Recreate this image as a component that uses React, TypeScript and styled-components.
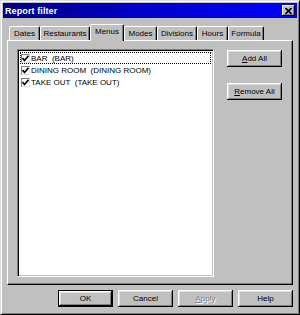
import React from 'react';
import styled, { createGlobalStyle } from 'styled-components';

const Global = createGlobalStyle`
  html, body {
    margin: 0;
    padding: 0;
    background: #c0c0c0;
  }
  * {
    box-sizing: border-box;
  }
`;

const Window = styled.div`
  width: 300px;
  height: 315px;
  background: #c0c0c0;
  border: 1px solid;
  border-color: #dfdfdf #000 #000 #dfdfdf;
  box-shadow: inset 1px 1px #fff, inset -1px -1px #808080;
  padding: 2px;
  display: flex;
  flex-direction: column;
  font-family: 'Liberation Sans', Arial, sans-serif;
  font-size: 8px;
  color: #000;
`;

const TitleBar = styled.div`
  height: 15px;
  background: linear-gradient(to right, #000080 0%, #0000c8 45%, #0000ff 100%);
  display: flex;
  align-items: center;
  justify-content: space-between;
  padding: 0 2px 0 2px;
`;

const Title = styled.span`
  color: #fff;
  font-weight: bold;
  font-size: 9px;
  letter-spacing: 0.1px;
`;

const CloseButton = styled.div`
  width: 13px;
  height: 11px;
  background: #c0c0c0;
  box-shadow: inset -1px -1px #000, inset 1px 1px #fff, inset -2px -2px #808080;
  display: flex;
  align-items: center;
  justify-content: center;
`;

const Body = styled.div`
  flex: 1;
  display: flex;
  flex-direction: column;
  padding: 6px 4px 5px 4px;
`;

const TabStrip = styled.div`
  display: flex;
  align-items: flex-end;
  height: 16px;
  padding-left: 2px;
  position: relative;
  z-index: 1;
`;

const Tab = styled.div<{ $w: number; $active?: boolean }>`
  width: ${(p) => p.$w}px;
  height: ${(p) => (p.$active ? 17 : 14)}px;
  margin-bottom: ${(p) => (p.$active ? -1 : 0)}px;
  background: #c0c0c0;
  border-top: 1px solid #fff;
  border-left: 1px solid #fff;
  border-right: 1px solid #000;
  border-radius: 2px 2px 0 0;
  box-shadow: inset -1px 0 #808080;
  display: flex;
  align-items: ${(p) => (p.$active ? 'flex-start' : 'center')};
  padding-top: ${(p) => (p.$active ? 2 : 0)}px;
  justify-content: center;
  white-space: nowrap;
`;

const Panel = styled.div`
  height: 245px;
  border: 1px solid;
  border-color: #fff #000 #000 #fff;
  box-shadow: inset -1px -1px #808080;
  display: flex;
  gap: 13px;
  padding: 8px 0 0 9px;
`;

const ListBox = styled.div`
  width: 197px;
  height: 228px;
  background: #fff;
  border: 1px solid;
  border-color: #808080 #fff #fff #808080;
  box-shadow: inset 1px 1px #000, inset -1px -1px #c0c0c0;
  padding: 2px 2px;
  display: flex;
  flex-direction: column;
`;

const Row = styled.div<{ $focus?: boolean }>`
  height: 12px;
  display: flex;
  align-items: center;
  padding-left: 1px;
  outline: ${(p) => (p.$focus ? '1px dotted #000' : 'none')};
  outline-offset: -1px;
  white-space: pre;
`;

const Check = styled.div`
  width: 9px;
  height: 9px;
  margin-right: 1px;
  border: 1px solid;
  border-color: #808080 #dfdfdf #dfdfdf #808080;
  background: #fff;
  display: flex;
  align-items: center;
  justify-content: center;
`;

const SideButtons = styled.div`
  display: flex;
  flex-direction: column;
  gap: 16px;
  padding-top: 1px;
`;

const Button = styled.div<{ $default?: boolean; $disabled?: boolean }>`
  width: 55px;
  height: 17px;
  background: #c0c0c0;
  display: flex;
  align-items: center;
  justify-content: center;
  border: ${(p) => (p.$default ? '1px solid #000' : 'none')};
  box-shadow: inset -1px -1px #000, inset 1px 1px #fff, inset -2px -2px #808080, inset 2px 2px #dfdfdf;
  color: ${(p) => (p.$disabled ? '#808080' : '#000')};
  text-shadow: ${(p) => (p.$disabled ? '1px 1px #fff' : 'none')};
`;

const ButtonRow = styled.div`
  display: flex;
  justify-content: flex-end;
  gap: 5px;
  margin-top: 5px;
`;

const tabs = [
  { label: 'Dates', w: 31 },
  { label: 'Restaurants', w: 50 },
  { label: 'Menus', w: 34, active: true },
  { label: 'Modes', w: 33 },
  { label: 'Divisions', w: 40 },
  { label: 'Hours', w: 31 },
  { label: 'Formula', w: 36 },
];

const items = ['BAR  (BAR)', 'DINING ROOM  (DINING ROOM)', 'TAKE OUT  (TAKE OUT)'];

const CheckMark = () => (
  <svg width="7" height="7" viewBox="0 0 7 7">
    <path d="M0.5 3 L2.5 5.5 L6.5 0.8" stroke="#000" strokeWidth="1.6" fill="none" />
  </svg>
);

export default function App() {
  return (
    <>
      <Global />
      <Window>
        <TitleBar>
          <Title>Report filter</Title>
          <CloseButton>
            <svg width="7" height="6" viewBox="0 0 7 6">
              <path d="M0.5 0 L6.5 6 M6.5 0 L0.5 6" stroke="#000" strokeWidth="1.6" />
            </svg>
          </CloseButton>
        </TitleBar>
        <Body>
          <TabStrip>
            {tabs.map((t) => (
              <Tab key={t.label} $w={t.w} $active={t.active}>
                {t.label}
              </Tab>
            ))}
          </TabStrip>
          <Panel>
            <ListBox>
              {items.map((it, i) => (
                <Row key={it} $focus={i === 0}>
                  <Check>
                    <CheckMark />
                  </Check>
                  {it}
                </Row>
              ))}
            </ListBox>
            <SideButtons>
              <Button>
                <span>
                  <u>A</u>dd All
                </span>
              </Button>
              <Button>
                <span>
                  <u>R</u>emove All
                </span>
              </Button>
            </SideButtons>
          </Panel>
          <ButtonRow>
            <Button $default>OK</Button>
            <Button>Cancel</Button>
            <Button $disabled>
              <span>
                <u>A</u>pply
              </span>
            </Button>
            <Button>Help</Button>
          </ButtonRow>
        </Body>
      </Window>
    </>
  );
}
